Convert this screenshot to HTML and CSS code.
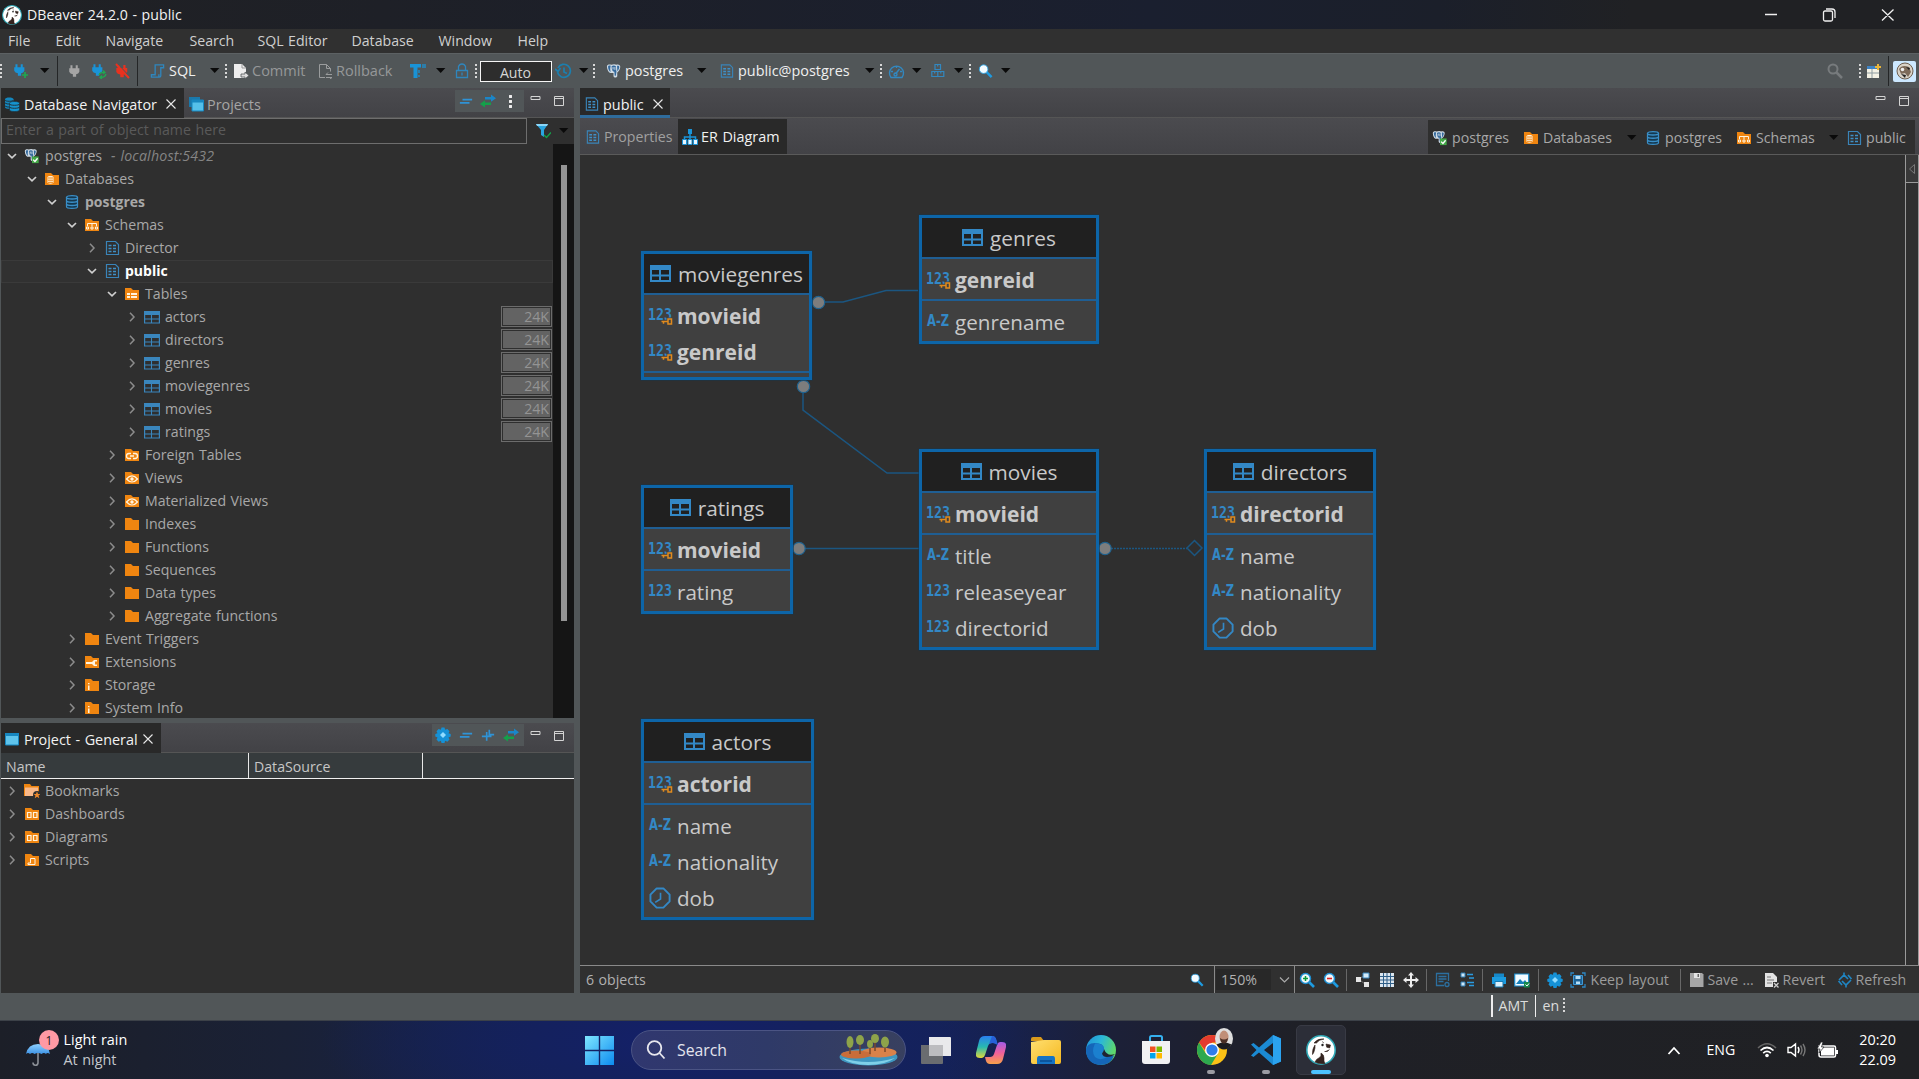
FILE: index.html
```html
<!DOCTYPE html>
<html lang="en">
<head>
<meta charset="utf-8">
<title>DBeaver 24.2.0 - public</title>
<link rel="stylesheet" href="styles.css">
</head>
<body>
<svg class="defs" width="0" height="0">
  <linearGradient id="g-win" x1="0" y1="0" x2="1" y2="1"><stop offset="0" stop-color="#7fe6ff"/><stop offset="1" stop-color="#0c8bf0"/></linearGradient>
  <linearGradient id="g-edge" x1="0" y1="0" x2="1" y2="0.4"><stop offset="0" stop-color="#1f8fd8"/><stop offset="0.5" stop-color="#2bb7d8"/><stop offset="1" stop-color="#5fd86a"/></linearGradient>
  <linearGradient id="g-cop1" x1="0" y1="0" x2="0" y2="1"><stop offset="0" stop-color="#2a7ff0"/><stop offset="0.5" stop-color="#28b9b0"/><stop offset="1" stop-color="#e3d83a"/></linearGradient>
  <linearGradient id="g-cop2" x1="0" y1="0" x2="0" y2="1"><stop offset="0" stop-color="#a25be8"/><stop offset="0.5" stop-color="#f0609a"/><stop offset="1" stop-color="#f7a04a"/></linearGradient>
  <linearGradient id="g-fold" x1="0" y1="0" x2="1" y2="1"><stop offset="0" stop-color="#ffdf70"/><stop offset="1" stop-color="#f5b81f"/></linearGradient>
  <linearGradient id="g-umb" x1="0" y1="0" x2="0" y2="1"><stop offset="0" stop-color="#8fd0ff"/><stop offset="1" stop-color="#3d93e6"/></linearGradient>
  <symbol id="dn" viewBox="0 0 10 6"><path d="M0 0h9.4L4.7 5z" fill="#0a0a0a"/></symbol>
  <symbol id="open" viewBox="0 0 10 10"><path d="M1 3l4 3.8L9 3" fill="none" stroke="#d0d0d0" stroke-width="1.7"/></symbol>
  <symbol id="closed" viewBox="0 0 10 10"><path d="M3 .8L7 5 3 9.2" fill="none" stroke="#8c8c8c" stroke-width="1.5"/></symbol>
  <symbol id="x" viewBox="0 0 10 10"><path d="M.5.5l9 9M9.500.5l-9 9" fill="none" stroke="#e8e8e8" stroke-width="1.1"/></symbol>
  <symbol id="min" viewBox="0 0 12 12"><path d="M1 1.500h9v3h-9z" fill="none" stroke="#d4d4d4"/></symbol>
  <symbol id="max" viewBox="0 0 12 12"><path d="M1.500 1.500h9v9h-9zM1 3.500h10" fill="none" stroke="#d4d4d4"/></symbol>
  <symbol id="folder" viewBox="0 0 16 16"><path d="M1 2h6l2 2h6v10H1z" fill="#ef8510"/></symbol>
  <symbol id="f-db" viewBox="0 0 16 16"><use href="#folder"/><path d="M3.500 6c0-1.500 6-1.500 6 0v5.500c0 1.500-6 1.500-6 0z" fill="#fff3de"/><path d="M4 7h5M4 9.200h5M4 11.300h5" stroke="#ef8510"/></symbol>
  <symbol id="f-sch" viewBox="0 0 16 16"><use href="#folder"/><path d="M3.500 9V6.500h9V9M8 6.500V9M2.500 10h2v2h-2zM7 10h2v2H7zM11.500 10h2v2h-2z" fill="none" stroke="#fff3de"/></symbol>
  <symbol id="f-tab" viewBox="0 0 16 16"><use href="#folder"/><path d="M3 8h3M7 8h6M3 11h3M7 11h6" stroke="#fff3de" stroke-width="1.800"/></symbol>
  <symbol id="f-link" viewBox="0 0 16 16"><use href="#folder"/><path d="M7 6.500H5a2.500 2.500 0 000 5h2M9 6.500h2a2.500 2.500 0 010 5H9M6 9h4" fill="none" stroke="#fff3de" stroke-width="1.300"/></symbol>
  <symbol id="f-eye" viewBox="0 0 16 16"><use href="#folder"/><path d="M2.500 9Q8 2.800 13.500 9 8 15 2.500 9z" fill="none" stroke="#fff3de" stroke-width="1.200"/><circle cx="8" cy="9" r="1.700" fill="#fff3de"/></symbol>
  <symbol id="f-ext" viewBox="0 0 16 16"><use href="#folder"/><path d="M2 8h6l2-2h3v1.500h-2v3h2V12h-3l-2-2H2z" fill="#fff3de"/></symbol>
  <symbol id="f-i" viewBox="0 0 16 16"><use href="#folder"/><path d="M4 6h1.500v1.300H4zM4 8.500h1.500V13H4z" fill="#fff3de"/></symbol>
  <symbol id="f-book" viewBox="0 0 16 16"><path d="M0 1h6l1.500 2H15v6l-6 4H0z" fill="#ef8510"/><path d="M1 4.500h13V8l-5 5H1z" fill="#f9b98a"/><circle cx="13" cy="12" r="4" fill="#2f2f2f"/><path d="M13 8.500l1 2.500h2.500l-2 1.600.8 2.600-2.300-1.500-2.300 1.500.8-2.600-2-1.600H12z" fill="#f0892a"/></symbol>
  <symbol id="f-dash" viewBox="0 0 16 16"><use href="#folder"/><path d="M3.500 6.500h3.500v5H3.500zM9.500 6.500H13v5H9.500z" fill="none" stroke="#fff3de" stroke-width="1.200"/></symbol>
  <symbol id="f-scr" viewBox="0 0 16 16"><use href="#folder"/><path d="M6.500 6.500h4.500v6H4v-1.500h2.500z" fill="none" stroke="#fff3de"/></symbol>
  <symbol id="db" viewBox="0 0 16 16"><path d="M2.500 3.300C2.500 1 13.500 1 13.500 3.300v9.500c0 2.200-11 2.200-11 0z" fill="#15384f" stroke="#3a8fc8" stroke-width="1.200"/><path d="M2.500 3.500c0 2 11 2 11 0M2.500 6.700c0 2 11 2 11 0M2.500 9.900c0 2 11 2 11 0" fill="none" stroke="#3a8fc8" stroke-width="1.500"/></symbol>
  <symbol id="doc" viewBox="0 0 16 16"><path d="M2.500 1.500h9l3 3v10h-12z" fill="none" stroke="#3a84b8" stroke-width="1.200"/><path d="M4.500 5.500h3M4.500 8.500h3M4.500 11.500h3M9 5.500h3M9 8.500h3M9 11.500h3" stroke="#3f8fc6" stroke-width="1.600"/></symbol>
  <symbol id="table" viewBox="0 0 16 14"><path d="M.6 1.600h14.800v11.400H.6z" fill="none" stroke="#3a86bd" stroke-width="1.200"/><path d="M0 1h16v4H0z" fill="#3a86bd"/><path d="M0 9h16M7.500 4v9" stroke="#3a86bd" stroke-width="1.100"/></symbol>
  <symbol id="ertable" viewBox="0 0 21 17"><path d="M1 1h19v15H1z" fill="none" stroke="#3388c6" stroke-width="2"/><path d="M0 0h21v5H0z" fill="#3388c6"/><path d="M0 10.500h21M10 4v12" stroke="#3388c6" stroke-width="2"/></symbol>
  <symbol id="pg" viewBox="0 0 16 16"><path d="M1 3C1 .8 4 .6 5.500 1.400 8 .3 10 .6 11 1.300c2-.8 4.500 0 4.200 2.500C15 6 13.600 9 12 9.500v4c-.5 2-3.500 2-4 0V10H5C2.500 10 1 6 1 3z" fill="#cfdbe5"/><path d="M2.200 3.500C2.200 2 4 2 5 2.400 4.300 5 4.400 7 5 9 3.500 8.500 2.200 6 2.200 3.500zM6 3c1-1.200 3.500-1.200 4.500 0 .4 2 0 4 .7 5.500L10.500 13h-1.200l-.4-4.300C6.500 9 6 5 6 3zM11.800 2.500c1.500-.4 2.600.2 2.300 1.700-.2 1.400-1 3-2 4z" fill="#356a9d"/><path d="M7.500 3.800v2.500M9.500 3.800v3" stroke="#cfdbe5"/></symbol>
  <symbol id="pgok" viewBox="0 0 18 17"><use href="#pg" width="15" height="15"/><path d="M9 9h7.500v7.500H9z" fill="#43a847"/><path d="M10.300 12.600l2 2 3-3.600" fill="none" stroke="#fff" stroke-width="1.500"/></symbol>
  <symbol id="plug" viewBox="0 0 16 16"><path d="M3 1h2.500v3.500h4V1H12v3.500h2V9q-1 2.500-4 3v3H6v-3Q2.500 11.500 1.500 9V4.500H3z"/></symbol>
  <symbol id="dbs" viewBox="0 0 16 16"><path d="M1 3.300C1 1 9.500 1 9.500 3.300v8c0 2-8.500 2-8.500 0z" fill="#1486bd"/><path d="M5.500 7c0-2 10-2 10 0v7c0 2-10 2-10 0z" fill="#1594cf" stroke="#202a30" stroke-width=".6"/><path d="M1 4c0 1.700 8.500 1.700 8.500 0M1 7q2 1.300 4.500 1M1 10q2 1.300 4.500 1M5.500 8c0 1.700 10 1.700 10 0M5.500 11c0 1.700 10 1.700 10 0" fill="none" stroke="#202a30" stroke-width=".9"/></symbol>
  <symbol id="projs" viewBox="0 0 16 16"><path d="M1 1h11v10H1z" fill="#1a78ab"/><path d="M4 4h11.500v11H4z" fill="#55c0ea" stroke="#1787c0"/><path d="M4 4h12v2.500H4z" fill="#1787c0"/></symbol>
  <symbol id="proj" viewBox="0 0 16 16"><path d="M1.500 2.500h13v11.500h-13z" fill="#5fc4ec" stroke="#1787c0"/><path d="M1 2h14v3H1z" fill="#1787c0"/></symbol>
  <symbol id="minus" viewBox="0 0 16 16"><path d="M4 6.500h11M1 10h11" stroke="#2f93d6" stroke-width="2"/></symbol>
  <symbol id="plus" viewBox="0 0 16 16"><path d="M1 9.500h11M6.500 4.500v10M9.500 2v5.500H15" fill="none" stroke="#2f93d6" stroke-width="1.900"/></symbol>
  <symbol id="sync" viewBox="0 0 16 16"><path d="M5 4h6V1.500L16 5.200 11 8.700V6.500H5z" fill="#1a86c8"/><path d="M11 9.500H5V7.300L0 11l5 3.500V12h6z" fill="#14a04a"/></symbol>
  <symbol id="gear" viewBox="0 0 16 16"><path d="M6.500.5h3l.6 2.200 2.300-.8 2.100 2.300-1 2 2.200.8v2.500l-2.200.9 1 2.100-2.100 2.200-2.300-1-.6 2.300h-3l-.6-2.300-2.300 1-2.100-2.200 1-2.100L.3 9.500V7l2.200-.8-1-2L3.600 1.900l2.300.8z" fill="#1591d6"/><path d="M8 5l3 3-3 3-3-3z" fill="#8fdcff"/></symbol>
  <symbol id="mag" viewBox="0 0 16 16"><path d="M9 9l5.500 5.500" stroke="#1e9be0" stroke-width="2.600"/><circle cx="6" cy="6" r="4.600" fill="#f4fbff" stroke="#1e9be0" stroke-width=".9"/></symbol>
  <symbol id="magp" viewBox="0 0 16 16"><path d="M10 10l5 5" stroke="#1e9be0" stroke-width="2.600"/><circle cx="6.500" cy="6.500" r="5" fill="#f2f8fb" stroke="#1e8ed0" stroke-width="1.500"/><path d="M4 6.500h5M6.500 4v5" stroke="#0a9a3c" stroke-width="1.500"/></symbol>
  <symbol id="magm" viewBox="0 0 16 16"><path d="M10 10l5 5" stroke="#1e9be0" stroke-width="2.600"/><circle cx="6.500" cy="6.500" r="5" fill="#f2f8fb" stroke="#1e8ed0" stroke-width="1.500"/><path d="M4 6.500h5" stroke="#d22" stroke-width="1.600"/></symbol>
  <symbol id="scroll" viewBox="0 0 16 16"><path d="M5.500 1.500h9v3h-3v8.500q0 1.500-1.500 1.500H1.500v-2.500h4zM9.500 14v-2.500" fill="none" stroke="#2f86bd" stroke-width="1.400"/></symbol>
  <symbol id="beaver" viewBox="0 0 30 30"><circle cx="15" cy="15" r="14.200" fill="#fff" stroke="#2fa7b5" stroke-width="1.600"/><path d="M9 10q-3 4-2.500 9.500Q8 18 9 13zM8 8q4-5 10-4-5 .5-7.500 4zM20 9l4.500 1-.8 3-3-.8zM16 6.500l2 1.500M18.500 16.500q3 1 5-2M9 27q4 2.500 10 1.500-1.500-2-1-5.500 0-3.500-3-5 .5 3-1.500 4.500Q10 24 9 27z" fill="#33231f" stroke="#33231f" stroke-width=".6"/><circle cx="16.500" cy="10" r="1.200" fill="#222"/></symbol>
  <symbol id="clock" viewBox="0 0 24 24"><path d="M8 1.500h7L21.500 8v7L15 21.500H8L1.500 15V8z" fill="none" stroke="#3388c6" stroke-width="2" stroke-linejoin="round"/><path d="M12 6v6.500L6.500 16" fill="none" stroke="#3388c6" stroke-width="1.700"/></symbol>
</svg>
<svg class="types">
  <symbol id="n123" viewBox="0 0 25 20"><text x="0" y="14" textLength="24" lengthAdjust="spacingAndGlyphs" class="glyph mono">123</text></symbol>
  <symbol id="n123k" viewBox="0 0 25 20"><use href="#n123" width="25" height="20"/><path d="M13.500 15.500h6M15.500 15.500v2.200M20 13h3.500v5H20z" fill="none" stroke="#404040" stroke-width="3"/><path d="M13.500 15.500h6M15.500 15.500v2.200M20 13h3.500v5H20z" fill="none" stroke="#e08a1e" stroke-width="1.500"/></symbol>
  <symbol id="az" viewBox="0 0 25 20"><text x="1" y="14" textLength="22" lengthAdjust="spacingAndGlyphs" class="glyph az">A-Z</text></symbol>
</svg>

<div class="app">
  <header class="title">
    <svg width="20" height="20"><use href="#beaver"/></svg>
    <span class="title-text">DBeaver 24.2.0 - public</span>
    <svg class="wincap" width="140" height="20" viewBox="0 0 140 20" fill="none" stroke="#f0f0f0"><path d="M2 9.500h12M60.500 7.500q0-1.500 1.500-1.500h6q1.500 0 1.500 1.500v7q0 1.500-1.500 1.500h-6q-1.500 0-1.500-1.500zM63 4h6q3 0 3 3v6M119 4.500l11.500 11M130.500 4.500l-11.500 11" stroke-width="1.300"/></svg>
  </header>
  <nav class="menu"><span>File</span><span>Edit</span><span>Navigate</span><span>Search</span><span>SQL Editor</span><span>Database</span><span>Window</span><span>Help</span></nav>

  <div class="toolbar">
    <i class="grip"></i>
    <svg width="16" height="16" fill="#1a93d6"><use href="#plug" width="13" height="14"/><path d="M9 12h6M12 9v6" stroke="#1fa750" stroke-width="1.700"/></svg>
    <svg class="caret"><use href="#dn"/></svg>
    <i class="sep"></i>
    <svg width="14" height="16" fill="#a5a5a5"><use href="#plug" width="13" height="16" x="-1"/></svg>
    <svg width="16" height="16" fill="#1a93d6"><use href="#plug" width="13" height="14"/><path d="M8 12q1-3 5-2.500M15 11q-1 3.500-5 3.300M12 7.500l2 2-2 1.500M11 12.500l-2 2 2 1.500" fill="none" stroke="#1fa750" stroke-width="1.300"/></svg>
    <svg width="16" height="16" fill="#e8321f"><use href="#plug" width="14" height="16"/><path d="M1 1l13 14" stroke="#e8321f" stroke-width="2"/><path d="M3 1l13 14" stroke="#515658"/></svg>
    <i class="sep"></i>
    <svg width="15" height="16"><use href="#scroll" width="15" height="16"/></svg>
    <span class="tb-hi">SQL</span>
    <svg class="caret"><use href="#dn"/></svg>
    <i class="grip"></i>
    <svg width="16" height="16"><path d="M1 1h8l4 4v10H1z" fill="#eee"/><path d="M9 1v4h4" fill="none" stroke="#999"/><path d="M8 11h4v-2l4 3.500L12 16v-2H8z" fill="#ddd" stroke="#515658" stroke-width=".8"/></svg>
    <span class="dim">Commit</span>
    <svg width="16" height="16" fill="none" stroke="#9a9c9d"><path d="M7 14.500H1.500v-13h7l4 4v3M8.500 1.500v4h4"/><path d="M8 11.500h6M8 11.500l2-2M8 14.500h6l-2 1.500"/></svg>
    <span class="dim">Rollback</span>
    <svg width="16" height="16"><path d="M0 1h11v3.500H7.500V15H3.500V4.500H0z" fill="#1a93d6"/><path d="M13 1v4M15 1v4M9 7v3M9 12v2" stroke="#1a93d6" stroke-width="1.300"/></svg>
    <svg class="caret"><use href="#dn"/></svg>
    <svg width="14" height="16" fill="none" stroke="#2f86bd" stroke-width="1.300"><path d="M1.500 7.500h11v7h-11zM3.500 7V3.500q1-2.500 3.500-2.500t3.500 2.500V7M7 9.500v3"/></svg>
    <i class="grip"></i>
    <span class="auto">Auto</span>
    <svg width="17" height="16" fill="none" stroke="#1c7fae" stroke-width="1.700"><path d="M3 5a6.500 6.500 0 11-.5 4M0 6l3 2.500L5.500 5M9 4.500V9l3 1.500"/></svg>
    <svg class="caret"><use href="#dn"/></svg>
    <i class="grip"></i>
    <svg width="15" height="16"><use href="#pg"/></svg>
    <span class="tb-hi">postgres</span>
    <svg class="caret"><use href="#dn"/></svg>
    <svg width="15" height="16"><use href="#doc" x="-1" width="15" height="16"/></svg>
    <span class="tb-hi">public@postgres</span>
    <svg class="caret"><use href="#dn"/></svg>
    <i class="grip"></i>
    <svg width="17" height="16" fill="none" stroke="#3288c0" stroke-width="1.400"><path d="M3 14.500a7 7 0 1111 0zM7.500 11l4-5M3 8.500h2M12 8.500h2M8.500 3v2"/><circle cx="7.500" cy="11.500" r="1.500"/></svg>
    <svg class="caret"><use href="#dn"/></svg>
    <svg width="14" height="16" fill="none" stroke="#3288c0" stroke-width="1.200"><path d="M4 1.500h5.500v5H4zM.8 8.500h6v5h-6zM6.800 8.500h6v5h-6zM6.700 1.500v2M3.700 8.500v2M9.800 8.500v2"/></svg>
    <svg class="caret"><use href="#dn"/></svg>
    <i class="grip"></i>
    <svg width="15" height="16"><use href="#mag" width="15" height="16"/></svg>
    <svg class="caret"><use href="#dn"/></svg>
    <svg width="16" height="16" fill="none" stroke="#777b7d"><circle cx="6" cy="6" r="4.500" stroke-width="2"/><path d="M9.500 9.500l5.500 5.500" stroke-width="2.500"/></svg>
    <i class="grip"></i>
    <svg width="16" height="16"><path d="M1 3h12v12H1z" fill="#f3f1e4"/><path d="M1 3h12v3H1z" fill="#3f83c4"/><path d="M6 6v9M1 10h12" stroke="#8d9ba0"/><path d="M9 4h6M12 1v6" stroke="#e9b53a" stroke-width="2"/></svg>
    <i class="sep"></i>
    <span class="persp"><svg width="18" height="18"><circle cx="9" cy="9" r="8" fill="#d9d3c8" stroke="#6e5f50"/><path d="M3 7q3-5 10-2l2 5-3 5-3-4-4 1z" fill="#7d6b5a"/><path d="M10 5l4 1-1 2zM5 12l5 1-1 3z" fill="#222"/><circle cx="6.500" cy="7.500" r="1.800" fill="#eee"/></svg></span>
  </div>

  <main class="work">
    <aside class="left">
      <section class="panel nav">
        <div class="tabs">
          <div class="tab on tab-nav"><svg width="16" height="16"><use href="#dbs"/></svg><span>Database Navigator</span><svg width="10" height="10"><use href="#x"/></svg></div>
          <div class="tab tab-proj"><svg width="16" height="16"><use href="#projs"/></svg><span>Projects</span></div>
          <div class="tools"><svg width="14" height="16"><use href="#minus"/></svg><svg width="16" height="16"><use href="#sync"/></svg><i class="dots"></i></div>
          <svg class="wbtn" width="12" height="12"><use href="#min"/></svg><svg class="wbtn" width="12" height="12"><use href="#max"/></svg>
        </div>
        <div class="filter"><div class="input">Enter a part of object name here</div>
          <svg width="16" height="16"><path d="M1 1h12L9 7v7l-3-2V7z" fill="#2aa5e0"/><path d="M1 1h12l-1 2H2z" fill="#8bd6f8"/><path d="M9 12l2.500 2.500L16 9.500" fill="none" stroke="#12a34a" stroke-width="1.400"/></svg><svg class="caret"><use href="#dn"/></svg></div>
        <div class="treewrap">
          <div class="tree">
            <div class="row l0"><svg class="tg"><use href="#open"/></svg><svg class="ic"><use href="#pgok"/></svg>postgres<em>- localhost:5432</em></div>
            <div class="row l1"><svg class="tg"><use href="#open"/></svg><svg class="ic"><use href="#f-db"/></svg>Databases</div>
            <div class="row l2 b"><svg class="tg"><use href="#open"/></svg><svg class="ic"><use href="#db"/></svg>postgres</div>
            <div class="row l3"><svg class="tg"><use href="#open"/></svg><svg class="ic"><use href="#f-sch"/></svg>Schemas</div>
            <div class="row l4"><svg class="tg"><use href="#closed"/></svg><svg class="ic"><use href="#doc"/></svg>Director</div>
            <div class="row l4 b sel"><svg class="tg"><use href="#open"/></svg><svg class="ic"><use href="#doc"/></svg>public</div>
            <div class="row l5"><svg class="tg"><use href="#open"/></svg><svg class="ic"><use href="#f-tab"/></svg>Tables</div>
            <div class="row l6"><svg class="tg"><use href="#closed"/></svg><svg class="ic"><use href="#table"/></svg>actors<span class="size">24K</span></div>
            <div class="row l6"><svg class="tg"><use href="#closed"/></svg><svg class="ic"><use href="#table"/></svg>directors<span class="size">24K</span></div>
            <div class="row l6"><svg class="tg"><use href="#closed"/></svg><svg class="ic"><use href="#table"/></svg>genres<span class="size">24K</span></div>
            <div class="row l6"><svg class="tg"><use href="#closed"/></svg><svg class="ic"><use href="#table"/></svg>moviegenres<span class="size">24K</span></div>
            <div class="row l6"><svg class="tg"><use href="#closed"/></svg><svg class="ic"><use href="#table"/></svg>movies<span class="size">24K</span></div>
            <div class="row l6"><svg class="tg"><use href="#closed"/></svg><svg class="ic"><use href="#table"/></svg>ratings<span class="size">24K</span></div>
            <div class="row l5"><svg class="tg"><use href="#closed"/></svg><svg class="ic"><use href="#f-link"/></svg>Foreign Tables</div>
            <div class="row l5"><svg class="tg"><use href="#closed"/></svg><svg class="ic"><use href="#f-eye"/></svg>Views</div>
            <div class="row l5"><svg class="tg"><use href="#closed"/></svg><svg class="ic"><use href="#f-eye"/></svg>Materialized Views</div>
            <div class="row l5"><svg class="tg"><use href="#closed"/></svg><svg class="ic"><use href="#folder"/></svg>Indexes</div>
            <div class="row l5"><svg class="tg"><use href="#closed"/></svg><svg class="ic"><use href="#folder"/></svg>Functions</div>
            <div class="row l5"><svg class="tg"><use href="#closed"/></svg><svg class="ic"><use href="#folder"/></svg>Sequences</div>
            <div class="row l5"><svg class="tg"><use href="#closed"/></svg><svg class="ic"><use href="#folder"/></svg>Data types</div>
            <div class="row l5"><svg class="tg"><use href="#closed"/></svg><svg class="ic"><use href="#folder"/></svg>Aggregate functions</div>
            <div class="row l3"><svg class="tg"><use href="#closed"/></svg><svg class="ic"><use href="#folder"/></svg>Event Triggers</div>
            <div class="row l3"><svg class="tg"><use href="#closed"/></svg><svg class="ic"><use href="#f-ext"/></svg>Extensions</div>
            <div class="row l3"><svg class="tg"><use href="#closed"/></svg><svg class="ic"><use href="#f-i"/></svg>Storage</div>
            <div class="row l3"><svg class="tg"><use href="#closed"/></svg><svg class="ic"><use href="#f-i"/></svg>System Info</div>
          </div>
          <div class="scroll"><div class="thumb"></div></div>
        </div>
      </section>
      <section class="panel project">
        <div class="tabs">
          <div class="tab on tab-gen"><svg width="16" height="16"><use href="#proj"/></svg><span>Project - General</span><svg width="10" height="10"><use href="#x"/></svg></div>
          <div class="tools four"><svg width="16" height="16"><use href="#gear"/></svg><svg width="14" height="16"><use href="#minus"/></svg><svg width="14" height="16"><use href="#plus"/></svg><svg width="16" height="16"><use href="#sync"/></svg></div>
          <svg class="wbtn" width="12" height="12"><use href="#min"/></svg><svg class="wbtn" width="12" height="12"><use href="#max"/></svg>
        </div>
        <div class="thead"><span>Name</span><span>DataSource</span><span></span></div>
        <div class="tree">
          <div class="row l0"><svg class="tg"><use href="#closed"/></svg><svg class="ic"><use href="#f-book"/></svg>Bookmarks</div>
          <div class="row l0"><svg class="tg"><use href="#closed"/></svg><svg class="ic"><use href="#f-dash"/></svg>Dashboards</div>
          <div class="row l0"><svg class="tg"><use href="#closed"/></svg><svg class="ic"><use href="#f-dash"/></svg>Diagrams</div>
          <div class="row l0"><svg class="tg"><use href="#closed"/></svg><svg class="ic"><use href="#f-scr"/></svg>Scripts</div>
        </div>
      </section>
    </aside>

    <section class="editor">
      <div class="tabs">
        <div class="tab on tab-pub"><svg width="15" height="16"><use href="#doc"/></svg><span>public</span><svg width="10" height="10"><use href="#x"/></svg></div>
        <svg class="wbtn first" width="12" height="12"><use href="#min"/></svg><svg class="wbtn" width="12" height="12"><use href="#max"/></svg>
      </div>
      <div class="subtabs">
        <div class="sub props"><svg width="15" height="16"><use href="#doc"/></svg><span>Properties</span></div>
        <div class="sub er"><svg width="16" height="18"><path d="M8 4v8M2.500 12V9h11v3" fill="none" stroke="#1a93d6" stroke-width="1.500"/><path d="M6 1h4v5H6z" fill="#1a93d6"/><path d="M.5 11.500h4v5h-4zM6 11.500h4v5H6zM11.500 11.500h4v5h-4z" fill="#e8f6ff" stroke="#1a93d6"/></svg><span>ER Diagram</span></div>
        <div class="crumbs">
          <svg width="16" height="16"><use href="#pgok"/></svg><span>postgres</span>
          <svg width="16" height="16"><use href="#f-db"/></svg><span>Databases</span><svg class="caret"><use href="#dn"/></svg>
          <svg width="16" height="16"><use href="#db"/></svg><span>postgres</span>
          <svg width="16" height="16"><use href="#f-sch"/></svg><span>Schemas</span><svg class="caret"><use href="#dn"/></svg>
          <svg width="16" height="16"><use href="#doc"/></svg><span>public</span>
        </div>
      </div>
      <div class="stage">
        <div class="canvas">
          <svg class="links" width="1324" height="810" viewBox="580 155 1324 810">
            <g fill="none" stroke="#1b5681" stroke-width="1.500"><path d="M824 302h19l43-11.500h32M803 393v17l84 63h32M805 548.500h114"/><path d="M1111 548.500h76" stroke-dasharray="2 1"/><path d="M1187 548l7.500-7.500 7.500 7.500-7.500 7.500z"/></g>
            <g fill="#7d7d7d" stroke="#1f628f" stroke-width="1.200"><circle cx="818.500" cy="302.500" r="6.200"/><circle cx="803.500" cy="386.500" r="6.200"/><circle cx="799" cy="548.500" r="6.200"/><circle cx="1105" cy="548.500" r="6.200"/></g>
          </svg>
          <div class="ent moviegenres"><h3><svg><use href="#ertable"/></svg>moviegenres</h3><div class="keys"><p><svg><use href="#n123k"/></svg>movieid</p><p><svg><use href="#n123k"/></svg>genreid</p></div><div class="cols"></div></div>
          <div class="ent genres"><h3><svg><use href="#ertable"/></svg>genres</h3><div class="keys"><p><svg><use href="#n123k"/></svg>genreid</p></div><div class="cols"><p><svg><use href="#az"/></svg>genrename</p></div></div>
          <div class="ent ratings"><h3><svg><use href="#ertable"/></svg>ratings</h3><div class="keys"><p><svg><use href="#n123k"/></svg>movieid</p></div><div class="cols"><p><svg><use href="#n123"/></svg>rating</p></div></div>
          <div class="ent movies"><h3><svg><use href="#ertable"/></svg>movies</h3><div class="keys"><p><svg><use href="#n123k"/></svg>movieid</p></div><div class="cols"><p><svg><use href="#az"/></svg>title</p><p><svg><use href="#n123"/></svg>releaseyear</p><p><svg><use href="#n123"/></svg>directorid</p></div></div>
          <div class="ent directors"><h3><svg><use href="#ertable"/></svg>directors</h3><div class="keys"><p><svg><use href="#n123k"/></svg>directorid</p></div><div class="cols"><p><svg><use href="#az"/></svg>name</p><p><svg><use href="#az"/></svg>nationality</p><p><svg class="clk"><use href="#clock"/></svg>dob</p></div></div>
          <div class="ent actors"><h3><svg><use href="#ertable"/></svg>actors</h3><div class="keys"><p><svg><use href="#n123k"/></svg>actorid</p></div><div class="cols"><p><svg><use href="#az"/></svg>name</p><p><svg><use href="#az"/></svg>nationality</p><p><svg class="clk"><use href="#clock"/></svg>dob</p></div></div>
        </div>
        <div class="palette"><div class="fly"><svg width="8" height="12"><path d="M6.500 1.500v9L1.500 6z" fill="none" stroke="#777"/></svg></div></div>
      </div>
      <div class="erbar">
        <span>6 objects</span>
        <svg width="16" height="16"><use href="#mag" width="14" height="16"/></svg>
        <div class="combo"><span>150%</span><svg width="11" height="8"><path d="M1 1.500l4.500 4.500L10 1.500" fill="none" stroke="#aaa" stroke-width="1.200"/></svg></div>
        <svg width="16" height="16"><use href="#magp"/></svg>
        <svg width="16" height="16"><use href="#magm"/></svg>
        <i class="bsep"></i>
        <svg width="16" height="16"><path d="M5 6L11 3M5 8l6 5" stroke="#777"/><path d="M1 5h5v5H1zM9 10h5v5H9z" fill="#e6e6e6"/><path d="M8 1h6v5H8z" fill="#d5ecfa" stroke="#3a86bd"/></svg>
        <svg width="16" height="16"><path d="M1 1h14v14H1z" fill="#dce6ee"/><path d="M1 4.500h14M1 8h14M1 11.500h14M4.500 1v14M8 1v14M11.500 1v14" stroke="#2f5f88"/></svg>
        <svg width="16" height="16" fill="#eee"><path d="M8 0l3 3.500H9V7h3.500V5L16 8l-3.500 3V9H9v3.500h2L8 16l-3-3.500h2V9H3.500v2L0 8l3.500-3v2H7V3.500H5z"/></svg>
        <i class="bsep"></i>
        <svg width="16" height="16" fill="none" stroke="#2c6f9f" stroke-width="1.300"><path d="M9 13.500H1.500v-12h12V9M3.500 4.500h8M3.500 7h8M3.500 9.500h5"/><circle cx="12" cy="12.500" r="2"/></svg>
        <svg width="16" height="16"><path d="M1 1h4v4H1zM1 10h4v4H1z" fill="#cfe6f5" stroke="#2f7db3"/><path d="M7 2.500h6M9 6h5M7 10.500h7M9 13.500h5" stroke="#2a9ae0" stroke-width="1.500"/></svg>
        <i class="bsep"></i>
        <svg width="16" height="16"><path d="M3 1.500h10V5H3z" fill="#1689c9"/><path d="M1 5h14v7H1z" fill="#1b9bdf"/><path d="M4 9.500h8V15H4z" fill="#d9f0fc" stroke="#157ab3"/></svg>
        <svg width="16" height="16"><path d="M.7 2h14v12H.7z" fill="#f3fbff" stroke="#1b8ccb" stroke-width="1.200"/><path d="M2 12l4-5 3 3 2-2 3 4z" fill="#177fb9"/><path d="M10 10h5.500v5.500H10z" fill="#168a4c"/><path d="M11.500 12.500l1.500 1.500 2-2.500" fill="none" stroke="#fff"/></svg>
        <i class="bsep"></i>
        <svg width="16" height="16"><use href="#gear"/></svg>
        <svg width="16" height="16"><path d="M1 4V1h3M12 1h3v3M15 12v3h-3M4 15H1v-3" fill="none" stroke="#2c86c2" stroke-width="1.300"/><path d="M3.500 3.500h9v9h-9z" fill="#1d6397" stroke="#3f9ad6"/><path d="M5.500 4h5v3h-5zM6 9.500h4V12H6z" fill="#b8def5"/></svg>
        <span class="dim2">Keep layout</span>
        <i class="bsep"></i>
        <svg width="15" height="16"><path d="M1 1h12l1.500 1.500V15H1z" fill="#a6a6a6"/><path d="M5 1h6v5H5z" fill="#e4e4e4"/><path d="M8.500 2h1.500v3H8.500z" fill="#666"/></svg>
        <span class="dim2">Save ...</span>
        <svg width="16" height="16"><path d="M1 1h8l4 4v10H1z" fill="#e2e2e2"/><path d="M3 5h4M3 8h7M3 11h5" stroke="#777"/><path d="M9 10h7v6H9z" fill="#303030"/><path d="M10 11l4.500 4.500M14.500 11L10 15.500" stroke="#ccc" stroke-width="1.300"/></svg>
        <span class="dim2">Revert</span>
        <svg width="16" height="16" fill="none" stroke="#1f86c4" stroke-width="1.600"><path d="M2 8l5-5 4 4M7 .5V4M14 8l-5 5-4-4M9 15.500V12M11 3l3.500 4M5 13L1.500 9"/></svg>
        <span class="dim2">Refresh</span>
      </div>
    </section>
  </main>

  <footer class="status"><i></i><span>AMT</span><i></i><span>en</span><b class="grip"></b></footer>

  <div class="taskbar">
    <div class="weather">
      <svg width="36" height="38" viewBox="0 0 36 38"><path d="M1 24Q3 14 13 14t12 10q-3-2-4 0-2-2-4.500 0-3.500-2-7 0Q7 22 5 24q-2-2-4 0z" fill="url(#g-umb)"/><path d="M13 23v10q-.5 2.500-2.800 2.200Q8 35 8 32.500" fill="none" stroke="#8b8f96" stroke-width="1.600"/><circle cx="24" cy="10" r="10" fill="#ff99a4"/><text x="24" y="15" text-anchor="middle" class="badge">1</text></svg>
      <div><div class="w1">Light rain</div><div class="w2">At night</div></div>
    </div>
    <svg width="29" height="29"><path d="M0 0h13.800v13.800H0zM15.200 0H29v13.800H15.200zM0 15.200h13.800V29H0zM15.200 15.200H29V29H15.200z" fill="url(#g-win)"/></svg>
    <div class="search">
      <svg width="20" height="20" fill="none" stroke="#e8e8ee" stroke-width="1.800"><circle cx="8.500" cy="8" r="6.800"/><path d="M13.500 13l5 5.500"/></svg>
      <span>Search</span>
      <svg width="59" height="32" viewBox="0 0 59 32"><ellipse cx="29.500" cy="23" rx="29" ry="8.500" fill="#3f97c0"/><ellipse cx="40" cy="18.500" rx="17.500" ry="5" fill="#d9824a"/><ellipse cx="17" cy="20.500" rx="15" ry="4" fill="#c96d3a"/><path d="M3 24q26 8 53 0-10 7-27 7T3 24z" fill="#7fd0e8"/><path d="M11 20V9M21 20V5M31 20V9M36 17V5M46 18V8" stroke="#7a4a2c" stroke-width="1.500"/><g fill="#8ea34a"><ellipse cx="11" cy="8" rx="3.500" ry="6"/><ellipse cx="21" cy="6" rx="4" ry="5"/><ellipse cx="31" cy="10" rx="3" ry="4"/><ellipse cx="36" cy="4.500" rx="4" ry="4.500"/><ellipse cx="46" cy="8" rx="4" ry="5.500"/></g></svg>
    </div>
    <svg width="30" height="29"><path d="M0 9h22v18q0 1-1 1H1q-1 0-1-1z" fill="#6a6c70"/><path d="M8 1h21q1 0 1 1v18H8z" fill="#e9e9eb"/><path d="M8 9h14v11H8z" fill="#bcbcbf"/></svg>
    <svg width="30" height="28" viewBox="0 0 30 28"><path d="M9 0h7q3 0 4 3l1 4h-5q-3 0-4 3l-3 9q-1 3-3 3H4q-5 0-4-5L3 5q1-5 6-5z" fill="url(#g-cop1)"/><path d="M21 28h-7q-3 0-4-3l-1-4h5q3 0 4-3l3-9q1-3 3-3h2q5 0 4 5l-3 12q-1 5-6 5z" fill="url(#g-cop2)"/><path d="M16 0q3 0 4 3l2 6-5-2q-2 0-4 1z" fill="#2760d8"/></svg>
    <svg width="30" height="28"><path d="M0 3q0-2 2-2h8l3 4H0z" fill="#d99a1c"/><path d="M0 6l13-2h15q2 0 2 2v20q0 2-2 2H2q-2 0-2-2z" fill="url(#g-fold)"/><path d="M6 28v-5q0-3 2-3h14q2 0 2 3v5z" fill="#1673c4"/><path d="M9 25h12" stroke="#0b4e93" stroke-width="1.600"/></svg>
    <svg width="30" height="30" viewBox="0 0 30 30"><circle cx="15" cy="15" r="15" fill="url(#g-edge)"/><path d="M0 16Q0 8 9 8q9 0 9 6 0 2-2 4 2 5 12 2.500Q25 30 14 30 1 29 0 16z" fill="#1566b8"/><path d="M9 8.500q9-.5 9 6 0 2-2 3.800Q17 22 22 21.500q-8 5-13 .5-4-5 0-13.500z" fill="#1b80cf"/><path d="M16 18.500q2-2 2-4.500 3 8 11 5-3 3-8 3-4 0-5-3.500z" fill="#202232"/></svg>
    <svg width="30" height="30"><path d="M9 7V2.500Q9 1 10.500 1h9Q21 1 21 2.500V7" fill="none" stroke="#35b0ee" stroke-width="2"/><path d="M1 6h28v20q0 3-3 3H4q-3 0-3-3z" fill="#f1f1f3"/><path d="M9 11.500h5.500V17H9z" fill="#f25022"/><path d="M15.500 11.500H21V17h-5.500z" fill="#7fba00"/><path d="M9 18h5.500v5.500H9z" fill="#00a4ef"/><path d="M15.500 18H21v5.500h-5.500z" fill="#ffb900"/></svg>
    <div class="app-ic"><svg width="36" height="37" viewBox="0 0 36 37"><circle cx="15" cy="22" r="15" fill="#fbc116"/><path d="M2 14.500A15 15 0 0128 14.500H15L11 26z" fill="#e33b2e"/><path d="M2 14.500A15 15 0 0014 37l7-11.500-12.500-.5z" fill="#2da94f"/><circle cx="15" cy="22" r="7" fill="#fff"/><circle cx="15" cy="22" r="5.600" fill="#2f7de9"/><ellipse cx="27" cy="10.500" rx="9" ry="10.500" fill="#dedede"/><ellipse cx="27" cy="9" rx="4.500" ry="6.500" fill="#c08f78"/><path d="M19.500 16.500q7.500-4 15 0-3 5-7.500 5t-7.500-5z" fill="#1b1b20"/><path d="M23 10q4 3 8 0-.5 5.500-4 5.500T23 10z" fill="#4a2f26"/></svg><i></i></div>
    <div class="app-ic"><svg width="30" height="30" viewBox="0 0 30 30"><path d="M22 0l8 3.500v23L22 30 8 17.500 2.500 22 0 20.500 5.500 15 0 9.500 2.500 8 8 12.500zM22 8l-9 7 9 7z" fill="#1b8ad3" fill-rule="evenodd"/><path d="M22 0l8 3.500v23L22 30z" fill="#2ba3f0"/></svg><i></i></div>
    <div class="app-ic active"><svg width="30" height="30"><use href="#beaver"/></svg><i></i></div>
    <div class="tray">
      <svg width="14" height="9"><path d="M1.500 8L7 2l5.500 6" fill="none" stroke="#fff" stroke-width="1.800"/></svg>
      <span>ENG</span>
      <svg width="20" height="16" viewBox="0 0 20 16" fill="none"><path d="M1 6q9-8.500 18 0" stroke="#666" stroke-width="1.600"/><path d="M3.500 8.500q6.500-6 13 0M6.200 11.200q3.800-3.500 7.600 0" stroke="#fff" stroke-width="1.700"/><circle cx="10" cy="13.500" r="1.800" fill="#fff"/></svg>
      <svg width="20" height="16" fill="none" stroke="#fff" stroke-width="1.400"><path d="M1 5.500h3L8.500 2v12L4 10.500H1zM11 5q2 3 0 6"/><path d="M13.500 3.500q3 4.500 0 9M16 2q4 6 0 12" stroke="#777"/></svg>
      <svg width="22" height="17"><path d="M2 4h15q1.500 0 1.500 1.500v8Q18.500 15 17 15H4q-2 0-2-2z" fill="none" stroke="#fff" stroke-width="1.500"/><path d="M4 5.500h13v8H4zM19 8h2v4h-2z" fill="#fff"/><path d="M4 0L0 7h3l-1 4 5-6H4.500L6 0z" fill="#fff" stroke="#202124" stroke-width=".7"/></svg>
      <div class="clock"><div>20:20</div><div>22.09</div></div>
    </div>
  </div>
</div>
</body>
</html>
```
FILE: styles.css
```css
* { box-sizing: border-box; }
body { margin: 0; background: #303030; }
svg { display: block; flex: none; }
.defs { position: absolute; }
.types { display: none; }
.app {
  width: 1919px; height: 1079px; overflow: hidden;
  display: flex; flex-direction: column;
  font: 14.150px/20px "Open Sans", "Noto Sans", sans-serif;
  color: #b0b0b0; white-space: nowrap; word-spacing: .8px;
}

/* title and menu */
.title { height: 29px; display: flex; align-items: center; padding-left: 2px; background: linear-gradient(90deg, #202124 0, #1e2027 20%, #1a1f2f 60%, #1b1f2a 75%, #202124 85%); color: #f2f2f2; }
.title-text { margin-left: 5px; flex: 1; letter-spacing: .05px; }
.wincap { margin-right: 16px; }
.menu { height: 24px; display: grid; grid-template-columns: 47.500px 50px 84px 68px 94px 87px 79px 60px; padding-left: 8px; align-items: center; background: #303030; color: #cfcfcf; }

/* main toolbar */
.toolbar {
  height: 35px; display: grid; align-items: center; background: #515658; border-top: 1px solid #5c6163;
  grid-template-columns: 13px 27px 17px 12px 22px 24px 22px 13px 19px 41px 15px 8px 19px 66px 18px 74px 26px 19px 20px 4px 76px 24px 14px 13px 19px 72px 23px 18px 127px 15px 8px 24px 19px 23px 15px 9px 23px 1fr 32px 7px 22px 5px 26px;
}
.grip { width: 2px; height: 15px; background: repeating-linear-gradient(#d8d8d8 0 2px, transparent 2px 4px); }
.caret { width: 10px; height: 6px; }
.sep { width: 1px; height: 30px; background: #242627; }
.tb-hi { color: #efefef; font-size: 14.400px; }
.dim { color: #969899; font-size: 14.500px; }
.auto { width: 72px; height: 21px; border: 1px solid #f5f5f5; background: #2d2d2d; color: #d5d5d5; text-align: center; line-height: 22px; margin-left: .5px; }
.persp { width: 23px; height: 21px; background: #cce8ff; border-radius: 2px; display: flex; align-items: center; justify-content: center; }

/* work area */
.work { height: 905px; display: grid; grid-template-columns: 574px 1fr; column-gap: 5px; background: #515658; padding-left: 1px; }
.left { display: grid; grid-template-rows: 630px 270px; row-gap: 5px; width: 573px; }
.panel { background: #2f2f2f; overflow: hidden; }
.tabs { height: 30px; display: flex; background: linear-gradient(#4b4b4f, #424246); border-bottom: 1px solid #555; }
.tab { display: flex; align-items: center; height: 30px; padding-left: 3px; color: #a5a5a5; padding-top: 2px; }
.tab span { margin: 2px 0 0 4px; flex: 1; font-size: 14.400px; }
.tab.on { background: #292929; color: #f2f2f2; }
.tab-nav { width: 183px; padding-right: 8px; }
.tab-proj { width: 88px; padding-left: 4px; }
.tab-proj span { margin-left: 3px; }
.tab-gen { width: 160px; padding-right: 8px; }
.tools { margin: 2px 6px 0 auto; width: 69px; height: 22px; background: #515658; display: flex; align-items: center; padding-left: 4px; gap: 7px; }
.tools.four { width: 92px; padding-left: 3px; gap: 8px; margin-top: 1px; }
.dots { width: 3px; height: 15px; margin-left: 6px; background: radial-gradient(circle, #eee 1.400px, transparent 1.600px) 0 0 / 3px 5px; }
.wbtn { margin: 7px 11px 0 0; }
.wbtn + .wbtn { margin-right: 9px; }
.wbtn.first { margin-left: auto; }
.filter { height: 26px; display: flex; align-items: center; border-bottom: 0; }
.input { width: 526px; height: 26px; border: 1px solid #6e6e6e; line-height: 22px; padding-left: 4px; color: #5a5a5a; letter-spacing: .03px; }
.filter > svg { margin-left: 8px; }
.filter > .caret { margin-left: 8px; }
.treewrap { height: 574px; display: flex; }
.tree { flex: 1; padding-top: .5px; color: #a8a8a8; }
.scroll { width: 21px; background: #151515; padding: 21px 7px 0; }
.thumb { height: 456px; background: #949494; width: 6px; margin-left: 1px; }
.row { height: 23px; display: flex; align-items: center; }
.tg { width: 10px; height: 10px; margin-right: 7px; }
.ic { width: 16px; height: 16px; margin-right: 5px; }
.row em { margin-left: 9px; color: #858585; letter-spacing: .2px; }
.b { font-weight: 700; font-size: 14px; }
.sel { background: #313131; box-shadow: inset 0 0 0 1px #3a3a3a; color: #fff; }
.l0 { padding-left: 6px; } .l1 { padding-left: 26px; } .l2 { padding-left: 46px; }
.l3 { padding-left: 66px; } .l4 { padding-left: 86px; } .l5 { padding-left: 106px; } .l6 { padding-left: 126px; }
.size { margin: -1px 1px 0 auto; width: 51px; height: 21px; border: 1px solid #6c6c6c; background: #636363; box-shadow: inset 0 0 0 1px #2f2f2f; color: #949494; text-align: right; padding-right: 2px; line-height: 19px; }
.thead { height: 26px; display: grid; grid-template-columns: 248px 174px 1fr; background: #363b3d; border-bottom: 1px solid #f0f0f0; color: #c6c6c6; }
.thead span { padding: 4px 0 0 5px; border-right: 1px solid #e8e8e8; }
.thead span:last-child { border: 0; }

/* editor */
.editor { display: flex; flex-direction: column; background: #2f2f2f; min-width: 0; }
.tab-pub { width: 90px; padding: 2px 7px 0 4px; box-shadow: inset 0 -3px #2f6c9c; }
.subtabs { height: 37px; display: flex; background: linear-gradient(#4b4b4f, #424246); border-bottom: 1px solid #5a5a5a; align-items: stretch; padding-top: 1px; }
.sub { display: flex; align-items: center; padding-top: 1px; }
.props { width: 98px; padding-left: 5px; color: #a0a0a0; }
.props span { margin-left: 4px; }
.er { width: 109px; background: #292929; color: #f2f2f2; padding-left: 4px; font-size: 14.400px; }
.er span { margin-left: 3px; }
.crumbs { margin: 1px 4px 0 auto; width: 487px; background: #2f2f2f; display: grid; grid-template-columns: 20px 71px 20px 84px 18px 20px 71px 20px 73px 17px 20px 1fr; padding-left: 4px; align-items: center; color: #a8a8a8; padding-top: 1px; }
.stage { height: 811px; display: grid; grid-template-columns: 1fr 14px; border-bottom: 1px solid #8a8a8a; }
.canvas { position: relative; overflow: hidden; }
.palette { border: solid #9a9a9a; border-width: 0 1px; }
.fly { height: 28px; border-bottom: 1px solid #9a9a9a; background: #383838; display: flex; align-items: center; justify-content: center; }
.links { position: absolute; left: 0; top: 0; }
.ent { position: absolute; border: 3px solid #0d65a8; background: #404040; color: #c9c9c9; font-size: 20.600px; box-shadow: 0 0 0 .5px #17364c; }
.ent h3 { margin: 0; height: 41px; background: #202020; border-bottom: 2px solid #1f5e93; display: flex; justify-content: center; align-items: center; font-weight: 400; font-size: 20.800px; gap: 7px; }
.ent h3 svg { width: 21px; height: 17px; }
.keys, .cols { padding-top: 4px; }
.keys { border-bottom: 2px solid #1f5e93; font-weight: 700; font-size: 21px; }
.ent p { margin: 0; height: 36px; display: flex; align-items: center; padding: 0 0 2px 4px; }
.ent p svg { width: 25px; height: 20px; margin-right: 4px; }
.ent p svg.clk { width: 23px; height: 23px; margin: 0 5.500px 0 .5px; }
.glyph { fill: #3388c6; font-weight: 700; }
.mono { font-family: "DejaVu Sans Mono", monospace; font-size: 16.500px; }
.az { font-family: "DejaVu Sans", sans-serif; font-size: 15px; }
.moviegenres { left: 61px; top: 96px; width: 171px; height: 129px; }
.genres { left: 339px; top: 60px; width: 180px; height: 129px; }
.ratings { left: 61px; top: 330px; width: 152px; height: 129px; }
.movies { left: 339px; top: 294px; width: 180px; height: 201px; }
.directors { left: 624px; top: 294px; width: 172px; height: 201px; }
.actors { left: 61px; top: 564px; width: 173px; height: 201px; }
.erbar { height: 27px; display: grid; align-items: center; padding-left: 6px; background: #303030; grid-template-columns: 1fr 24px 85px 24px 23px 9px 24px 24px 23px 9px 25px 22px 9px 23px 24px 9px 23px 21px 89px 9px 19px 56px 19px 54px 19px 63px; }
.combo { width: 81px; height: 27px; border: solid #8a8a8a; border-width: 0 1px; display: flex; align-items: center; justify-content: space-between; padding: 0 4px 0 6px; background: linear-gradient(#282828, #282828) 1px 3px / 55px 21px no-repeat; }
.bsep { width: 1px; height: 22px; background: #686868; }
.dim2 { color: #9c9c9c; margin-left: -.5px; }

/* status line */
.status { height: 28px; background: #515658; display: flex; align-items: center; padding: 0 0 2px 1491px; color: #dcdcdc; border-bottom: 1px solid #3c4148; }
.status i { width: 1.500px; height: 22px; background: #eee; margin-right: 6px; }
.status span { margin-right: 7px; }
.status .grip { margin-left: -3px; }

/* taskbar */
.taskbar { height: 58px; display: grid; align-items: center; grid-template-columns: 585px 46px 290px 55px 55px 55px 55px 45px 55px 55px 50px 1fr; background: radial-gradient(ellipse 360px 110px at 680px 20px, #14206a 0, #14215e 40%, transparent 100%), linear-gradient(90deg, #1c1f28 0, #1a2136 15%, #152250 30%, #14225a 48%, #1c2038 58%, #1f2026 68%, #202124 100%); }
.weather { display: flex; padding-left: 25px; gap: 2.500px; line-height: 20px; margin-top: -1px; font-size: 14.400px; }
.weather > svg { margin-top: 0; }
.w1 { color: #fff; } .w2 { color: #c4c7cc; }
.badge { font: 12px "Open Sans", sans-serif; fill: #222; }
.search { width: 275px; height: 40px; border-radius: 20px; background: linear-gradient(90deg, #30376f, #2f3a68 50%, #38405f); border: 1px solid #4b5484; display: flex; align-items: center; padding: 0 7px 0 14px; font-size: 15.800px; color: #e3e4ee; }
.search span { margin-left: 11px; flex: 1; }
.app-ic { width: 50px; height: 50px; display: flex; flex-direction: column; align-items: center; justify-content: flex-end; }
.app-ic svg { margin-bottom: 5px; }
.app-ic:nth-child(9) svg { margin-left: 8px; }
.app-ic i { width: 8px; height: 4px; border-radius: 2px; background: #9b9ba3; margin-bottom: 1px; }
.app-ic.active { background: #2c2e38; border: 1px solid #383a44; border-radius: 5px; }
.app-ic.active i { width: 20px; background: #4cc2ff; margin-bottom: 0; }
.tray { justify-self: end; display: flex; align-items: center; color: #fff; padding-right: 23px; }
.tray > span { margin: 0 22px 0 26px; }
.tray > svg + svg { margin-left: 10px; }
.clock { margin-left: 20px; text-align: right; font-size: 14.400px; }
```
